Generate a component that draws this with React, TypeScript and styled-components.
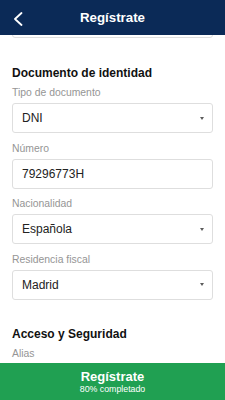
import React from "react";
import styled, { createGlobalStyle } from "styled-components";

const Global = createGlobalStyle`
  html, body { margin: 0; padding: 0; }
  body { font-family: "Liberation Sans", Arial, sans-serif; background: #fff; }
  * { box-sizing: border-box; }
`;

const Screen = styled.div`
  width: 225px;
  height: 400px;
  display: flex;
  flex-direction: column;
  overflow: hidden;
  background: #fff;
`;

const Header = styled.header`
  height: 35px;
  flex: none;
  background: #0b2a57;
  display: grid;
  grid-template-columns: 40px 1fr 40px;
  align-items: center;
  color: #fff;
`;

const BackButton = styled.button`
  border: 0;
  background: transparent;
  padding: 0 0 0 13px;
  margin: 0;
  height: 35px;
  display: flex;
  align-items: center;
  justify-content: flex-start;
  color: #fff;
  svg { margin-top: 2px; }
`;

const Title = styled.h1`
  margin: 0;
  font-size: 13.3px;
  font-weight: 700;
  text-align: center;
  line-height: 36px;
`;

const Content = styled.main`
  flex: 1;
  overflow: hidden;
  padding: 0 12px;
  display: flex;
  flex-direction: column;
`;

const Box = styled.div<{ $clipped?: boolean }>`
  height: 30px;
  flex: none;
  border: 1px solid #dedede;
  border-radius: 3px;
  display: flex;
  align-items: center;
  justify-content: space-between;
  padding: 0 8px 0 9px;
  font-size: 12px;
  color: #222;
  margin-top: ${(p) => (p.$clipped ? "-27px" : "0")};
`;

const Section = styled.section<{ $top: number }>`
  margin-top: ${(p) => p.$top}px;
  display: flex;
  flex-direction: column;
`;

const SectionTitle = styled.h2`
  margin: 0 0 4px;
  font-size: 12px;
  font-weight: 700;
  line-height: 18px;
  color: #111;
`;

const FieldList = styled.div`
  display: flex;
  flex-direction: column;
  gap: 8.5px;
`;

const Field = styled.div`
  display: flex;
  flex-direction: column;
`;

const Label = styled.label`
  font-size: 10.4px;
  line-height: 14px;
  color: #959595;
  margin-bottom: 3px;
`;

const Caret = styled.span`
  width: 0;
  height: 0;
  border-left: 2.5px solid transparent;
  border-right: 2.5px solid transparent;
  border-top: 3.5px solid #5c5c5c;
`;

const Footer = styled.footer`
  height: 37px;
  flex: none;
  background: #20a052;
  color: #fff;
  display: flex;
  flex-direction: column;
  align-items: center;
  justify-content: center;
`;

const FooterTitle = styled.div`
  font-size: 13px;
  font-weight: 700;
  line-height: 15px;
`;

const FooterSub = styled.div`
  font-size: 8.8px;
  line-height: 11px;
`;

type F = { label: string; value?: string; select?: boolean };

const identity: F[] = [
  { label: "Tipo de documento", value: "DNI", select: true },
  { label: "Número", value: "79296773H" },
  { label: "Nacionalidad", value: "Española", select: true },
  { label: "Residencia fiscal", value: "Madrid", select: true },
];

const access: F[] = [{ label: "Alias", value: "" }];

function Fields({ items }: { items: F[] }) {
  return (
    <FieldList>
      {items.map((f) => (
        <Field key={f.label}>
          <Label>{f.label}</Label>
          <Box>
            <span>{f.value}</span>
            {f.select && <Caret />}
          </Box>
        </Field>
      ))}
    </FieldList>
  );
}

export default function App() {
  return (
    <>
      <Global />
      <Screen>
        <Header>
          <BackButton aria-label="Volver">
            <svg width="10" height="14" viewBox="0 0 10 14" fill="none">
              <path d="M8.5 1 L2 7 L8.5 13" stroke="#fff" strokeWidth="1.8" strokeLinecap="round" strokeLinejoin="round" />
            </svg>
          </BackButton>
          <Title>Regístrate</Title>
          <span />
        </Header>
        <Content>
          <Box $clipped />
          <Section $top={26}>
            <SectionTitle>Documento de identidad</SectionTitle>
            <Fields items={identity} />
          </Section>
          <Section $top={25}>
            <SectionTitle>Acceso y Seguridad</SectionTitle>
            <Fields items={access} />
          </Section>
        </Content>
        <Footer>
          <FooterTitle>Regístrate</FooterTitle>
          <FooterSub>80% completado</FooterSub>
        </Footer>
      </Screen>
    </>
  );
}
